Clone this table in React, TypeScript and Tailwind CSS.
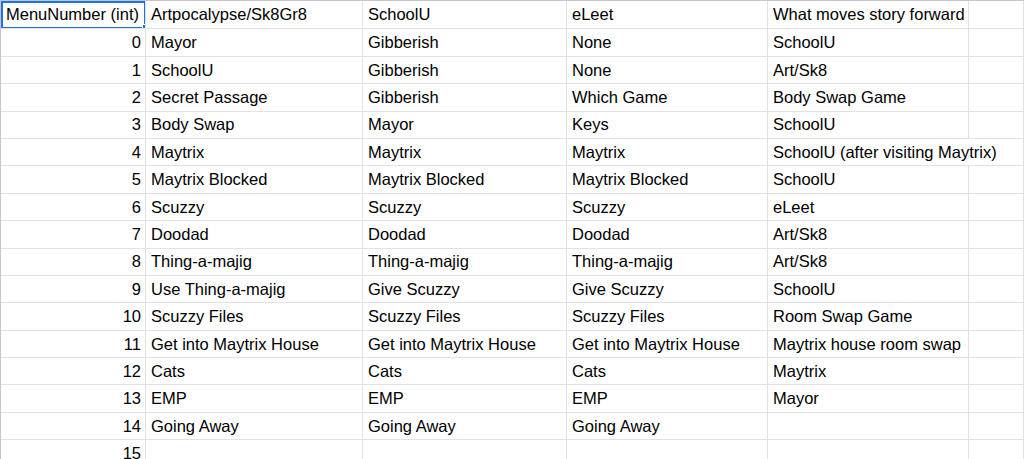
const rows: [string, string, string, string, string][] = [
  ["MenuNumber (int)", "Artpocalypse/Sk8Gr8", "SchoolU", "eLeet", "What moves story forward"],
  ["0", "Mayor", "Gibberish", "None", "SchoolU"],
  ["1", "SchoolU", "Gibberish", "None", "Art/Sk8"],
  ["2", "Secret Passage", "Gibberish", "Which Game", "Body Swap Game"],
  ["3", "Body Swap", "Mayor", "Keys", "SchoolU"],
  ["4", "Maytrix", "Maytrix", "Maytrix", "SchoolU (after visiting Maytrix)"],
  ["5", "Maytrix Blocked", "Maytrix Blocked", "Maytrix Blocked", "SchoolU"],
  ["6", "Scuzzy", "Scuzzy", "Scuzzy", "eLeet"],
  ["7", "Doodad", "Doodad", "Doodad", "Art/Sk8"],
  ["8", "Thing-a-majig", "Thing-a-majig", "Thing-a-majig", "Art/Sk8"],
  ["9", "Use Thing-a-majig", "Give Scuzzy", "Give Scuzzy", "SchoolU"],
  ["10", "Scuzzy Files", "Scuzzy Files", "Scuzzy Files", "Room Swap Game"],
  ["11", "Get into Maytrix House", "Get into Maytrix House", "Get into Maytrix House", "Maytrix house room swap"],
  ["12", "Cats", "Cats", "Cats", "Maytrix"],
  ["13", "EMP", "EMP", "EMP", "Mayor"],
  ["14", "Going Away", "Going Away", "Going Away", ""],
  ["15", "", "", "", ""],
];

function Cell({
  text,
  right,
  first,
  wide,
}: {
  text: string;
  right?: boolean;
  first?: boolean;
  wide?: boolean;
}) {
  return (
    <div
      className={`relative flex items-center whitespace-nowrap border-r border-[#e2e2e2] px-[5px] ${
        right ? "justify-end pr-[4px]" : ""
      } ${wide ? "col-span-2 overflow-hidden" : "overflow-hidden"}`}
    >
      {text}
      {first && (
        <>
          <div className="pointer-events-none absolute inset-0 -right-px -bottom-px border-2 border-[#1a73e8]" />
          <div className="absolute right-[-4px] bottom-[-3px] h-[7px] w-[7px] border border-white bg-[#1a73e8]" />
        </>
      )}
    </div>
  );
}

export default function App() {
  return (
    <div
      className="h-[459px] w-[1024px] overflow-hidden bg-white text-[16.5px] text-black"
      style={{ fontFamily: '"Liberation Sans", Arial, sans-serif' }}
    >
      <div className="border-t border-l border-[#c6c6c6]">
        {rows.map((r, i) => {
          const wide = r[4].length > 26;
          return (
            <div
              key={i}
              className={`grid grid-cols-[145px_217px_204px_201px_201px_1fr] border-b border-[#e2e2e2] ${
                i === 0 ? "h-[28.4px]" : "h-[27.4px]"
              }`}
            >
              <Cell text={r[0]} right={i > 0} first={i === 0} />
              <Cell text={r[1]} />
              <Cell text={r[2]} />
              <Cell text={r[3]} />
              <Cell text={r[4]} wide={wide} />
              {!wide && <div className="border-r border-[#e2e2e2]" />}
            </div>
          );
        })}
      </div>
    </div>
  );
}
